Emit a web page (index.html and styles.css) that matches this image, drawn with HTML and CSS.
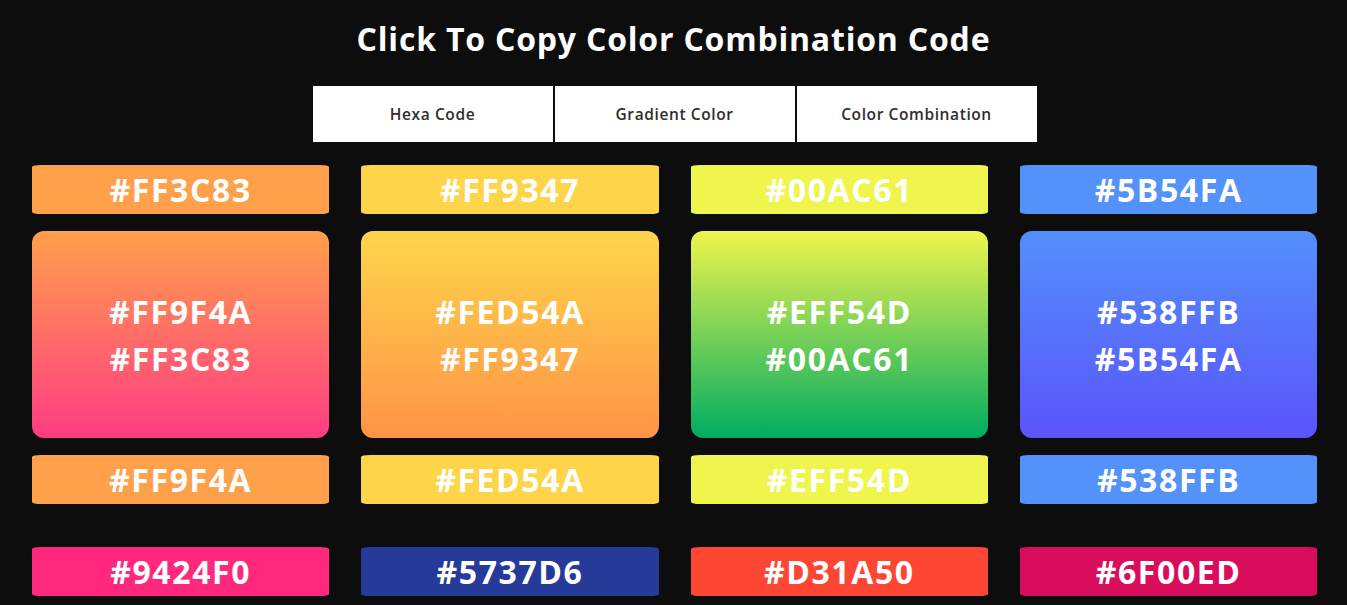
FILE: index.html
```html
<!DOCTYPE html>
<html lang="en">
<head>
<meta charset="utf-8">
<title>Color Combination</title>
<link rel="stylesheet" href="styles.css">
</head>
<body>
<main class="page">
  <h1 class="title">Click To Copy Color Combination Code</h1>
  <nav class="tabs">
    <button class="tab">Hexa Code</button>
    <button class="tab">Gradient Color</button>
    <button class="tab">Color Combination</button>
  </nav>
  <section class="grid">
    <div class="combo">
      <div class="bar c-orange">#FF3C83</div>
      <div class="box g-orange"><span>#FF9F4A</span><span>#FF3C83</span></div>
      <div class="bar c-orange">#FF9F4A</div>
    </div>
    <div class="combo">
      <div class="bar c-yellow">#FF9347</div>
      <div class="box g-yellow"><span>#FED54A</span><span>#FF9347</span></div>
      <div class="bar c-yellow">#FED54A</div>
    </div>
    <div class="combo">
      <div class="bar c-lime">#00AC61</div>
      <div class="box g-lime"><span>#EFF54D</span><span>#00AC61</span></div>
      <div class="bar c-lime">#EFF54D</div>
    </div>
    <div class="combo">
      <div class="bar c-blue">#5B54FA</div>
      <div class="box g-blue"><span>#538FFB</span><span>#5B54FA</span></div>
      <div class="bar c-blue">#538FFB</div>
    </div>
    <div class="combo">
      <div class="bar c-pink">#9424F0</div>
    </div>
    <div class="combo">
      <div class="bar c-navy">#5737D6</div>
    </div>
    <div class="combo">
      <div class="bar c-red">#D31A50</div>
    </div>
    <div class="combo">
      <div class="bar c-magenta">#6F00ED</div>
    </div>
  </section>
</main>
</body>
</html>
```
FILE: styles.css
```css
* { box-sizing: border-box; }
html, body { margin: 0; padding: 0; }
body {
  background: #0d0d0d;
  font-family: "Open Sans", "DejaVu Sans", sans-serif;
  color: #fff;
  overflow: hidden;
}
.page {
  display: flex;
  flex-direction: column;
  align-items: center;
}
.title {
  margin: 18px 0 0;
  font-size: 32px;
  line-height: 42px;
  font-weight: 700;
  letter-spacing: 0.8px;
  color: #fff;
}
.tabs {
  display: flex;
  gap: 2px;
  margin: 26px 0 0 2px;
}
.tab {
  width: 240px;
  height: 56px;
  border: 0;
  background: #fff;
  color: #2e2e2e;
  font-family: inherit;
  font-size: 15.5px;
  font-weight: 600;
  letter-spacing: 0.6px;
  padding: 0;
}
.grid {
  align-self: stretch;
  display: grid;
  grid-template-columns: repeat(4, 297.33px);
  column-gap: 32px;
  row-gap: 43px;
  padding: 0 0 0 32px;
  margin-top: 23px;
}
.combo {
  display: flex;
  flex-direction: column;
  gap: 17px;
}
.bar {
  height: 49px;
  border-radius: 9px / 2px;
  display: flex;
  align-items: center;
  justify-content: center;
  font-size: 32px;
  font-weight: 700;
  letter-spacing: 1.6px;
}
.box {
  height: 207px;
  border-radius: 12px;
  display: flex;
  flex-direction: column;
  align-items: center;
  justify-content: center;
  font-size: 32px;
  font-weight: 700;
  line-height: 47px;
  letter-spacing: 1.6px;
}
.c-orange { background: #ffa04a; }
.c-yellow { background: #fed54a; }
.c-lime { background: #eff54d; }
.c-blue { background: #5391fb; }
.c-pink { background: #ff287c; }
.c-navy { background: #253a99; }
.c-red { background: #ff4533; }
.c-magenta { background: #da0d5d; }
.g-orange { background: linear-gradient(#ff9f4a, #ff3c83); }
.g-yellow { background: linear-gradient(#fed54a, #ff9347); }
.g-lime { background: linear-gradient(#eff54d, #00ac61); }
.g-blue { background: linear-gradient(#538ffb, #5b54fa); }
```
